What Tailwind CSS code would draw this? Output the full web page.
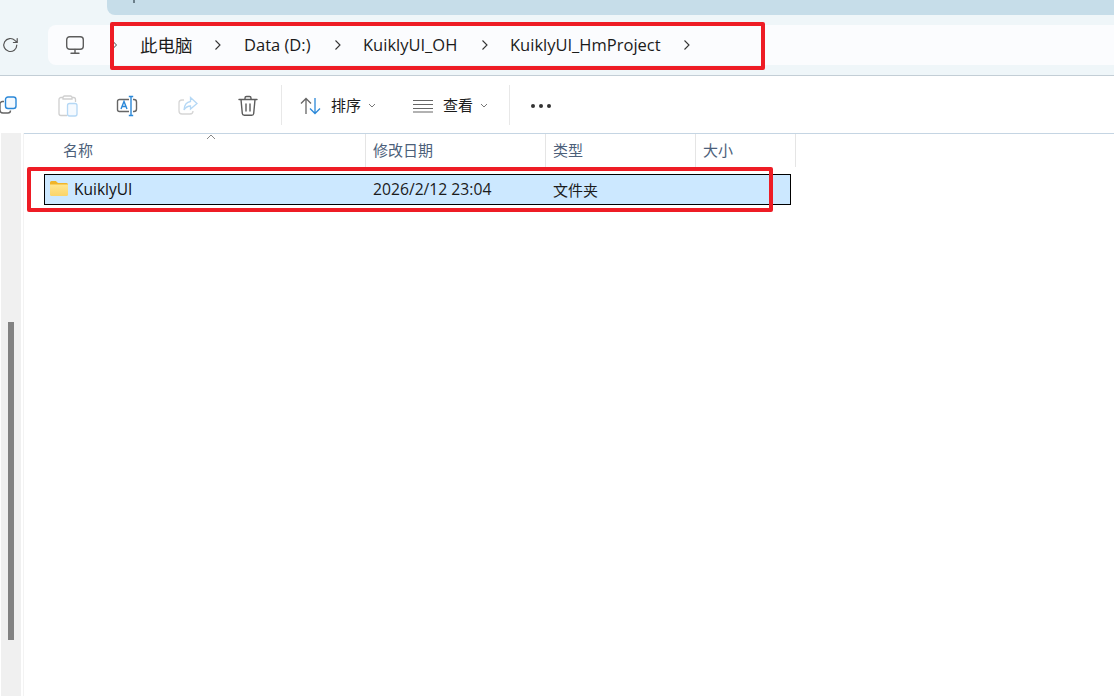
<!DOCTYPE html>
<html>

<head>
    <title>KuiklyUI_HmProject</title>
    <meta charset="UTF-8" />
    <meta name="viewport" content="width=device-width, initial-scale=1.0" />
    <script src="https://cdn.jsdelivr.net/npm/@tailwindcss/browser@4"></script>
</head>

<body class="bg-white overflow-hidden font-['Open_Sans','Noto_Sans_CJK_SC',sans-serif]">
    <div class="relative w-[1114px] h-[696px] flex flex-col overflow-hidden">

        <!-- tab strip + address bar -->
        <div class="h-[76px] shrink-0 bg-[#eff6f9] border-b border-[#c3ced6] flex flex-col">
            <div class="h-[15px] pl-[107px] shrink-0">
                <div class="h-full bg-[#c6dde9] rounded-bl-lg pl-[26px]">
                    <div class="w-[2px] h-[3px] bg-[#6b7f8a]"></div>
                </div>
            </div>
            <div class="flex items-center h-[60px]">
                <div class="w-[48px] shrink-0 pl-[2px]">
                    <svg width="18" height="18" viewBox="0 0 18 18" fill="none" stroke="#555" stroke-width="1.2" stroke-linecap="round">
                        <path d="M14.8 9a6.5 6.5 0 1 1-1.9-4.6L15 6.4M15.2 2.6v3.9h-3.8" />
                    </svg>
                </div>
                <div class="flex-1 h-[40px] mt-[-1px] pt-[1px] bg-[#fbfcfe] rounded-l-lg flex items-center text-[#1b1b1b] text-[16.5px]">
                    <svg class="ml-[18px] shrink-0" width="18" height="18" viewBox="0 0 18 18" fill="none" stroke="#5c5c5c" stroke-width="1.4" stroke-linejoin="round" stroke-linecap="round">
                        <rect x="0.700" y="0.700" width="16.600" height="12.600" rx="3" />
                        <path d="M9 13.500v3.500M5 17.200h8" />
                    </svg>
                    <svg class="ml-[28px] shrink-0" width="6" height="8" viewBox="0 0 6 8" fill="none" stroke="#444" stroke-width="1">
                        <path d="M1.5 1l3 3-3 3" />
                    </svg>
                    <span class="ml-[22px] w-[53px] shrink-0 whitespace-nowrap text-[17.5px]">此电脑</span>
                    <svg class="ml-[21px] shrink-0" width="8" height="12" viewBox="0 0 8 12" fill="none" stroke="#333" stroke-width="1.1">
                        <path d="M1.5 1.5L6 6l-4.500 4.500" />
                    </svg>
                    <span class="ml-[22px] w-[67px] shrink-0 whitespace-nowrap">Data (D:)</span>
                    <svg class="ml-[23px] shrink-0" width="8" height="12" viewBox="0 0 8 12" fill="none" stroke="#333" stroke-width="1.1">
                        <path d="M1.5 1.500L6 6l-4.500 4.500" />
                    </svg>
                    <span class="ml-[21px] w-[95px] shrink-0 whitespace-nowrap">KuiklyUI_OH</span>
                    <svg class="ml-[23px] shrink-0" width="8" height="12" viewBox="0 0 8 12" fill="none" stroke="#333" stroke-width="1.1">
                        <path d="M1.5 1.500L6 6l-4.500 4.500" />
                    </svg>
                    <span class="ml-[21px] w-[151px] shrink-0 whitespace-nowrap">KuiklyUI_HmProject</span>
                    <svg class="ml-[22px] shrink-0" width="8" height="12" viewBox="0 0 8 12" fill="none" stroke="#333" stroke-width="1.1">
                        <path d="M1.5 1.500L6 6l-4.500 4.500" />
                    </svg>
                </div>
            </div>
        </div>

        <!-- command bar -->
        <div class="h-[57px] shrink-0 bg-white flex items-center pt-[2px] text-[15px] text-[#1b1b1b]">
            <svg class="ml-[-1px] shrink-0" width="19" height="19" viewBox="0 0 19 19" fill="none" stroke-width="1.4">
                <path d="M5 5.500H3.500A2.500 2.500 0 0 0 1 8v6a3 3 0 0 0 3 3h5a2.500 2.500 0 0 0 2.500-2.500" stroke="#666" />
                <rect x="6.500" y="1" width="10.500" height="11.500" rx="2.500" stroke="#2b88d8" fill="#f4f9fe" />
            </svg>
            <svg class="ml-[40px] shrink-0" width="20" height="22" viewBox="0 0 20 22" fill="none" stroke-width="1.300">
                <path d="M5 2.500H3A2 2 0 0 0 1 4.500v14a2 2 0 0 0 2 2h6M14 2.500h1.500A2 2 0 0 1 17.500 4.500V7M5 2.500A1.500 1.500 0 0 1 6.500 1h6A1.500 1.500 0 0 1 14 2.500V4H5z" stroke="#cfcfcf" />
                <rect x="9.500" y="8.500" width="9.500" height="12.500" rx="2" stroke="#b5d8f5" fill="#f5faff" />
            </svg>
            <svg class="ml-[38px] shrink-0" width="22" height="22" viewBox="0 0 22 22" fill="none" stroke-width="1.400">
                <path d="M13 4.500H3.500A2 2 0 0 0 1.500 6.500v8a2 2 0 0 0 2 2H13M17 4.500h1A2.500 2.500 0 0 1 20.500 7v7A2.500 2.500 0 0 1 18 16.500h-1" stroke="#666" />
                <path d="M15 1.500v19M12.800 1.500h4.400M12.800 20.500h4.400" stroke="#2b88d8" />
                <path d="M5 14l3-7.500L11 14M6 11.500h4" stroke="#2b88d8" />
            </svg>
            <svg class="ml-[40px] shrink-0" width="20" height="20" viewBox="0 0 20 20" fill="none" stroke-width="1.300">
                <path d="M6 4H4a3 3 0 0 0-3 3v8a3 3 0 0 0 3 3h8a3 3 0 0 0 3-3" stroke="#d6d6d6" />
                <path d="M12.500 1.500L19 7.500l-6.500 5.500V10C9 10 7.500 11.500 6 14c.3-5 2.500-8 6.500-8.500z" stroke="#b5d8f5" />
            </svg>
            <svg class="ml-[40px] shrink-0" width="20" height="22" viewBox="0 0 20 22" fill="none" stroke="#5c5c5c" stroke-width="1.400" stroke-linecap="round" stroke-linejoin="round">
                <path d="M1 4.500h18M7 4.500V3a1.500 1.500 0 0 1 1.500-1.500h3A1.500 1.500 0 0 1 13 3v1.500M3 4.500l1.300 14a2 2 0 0 0 2 1.800h7.400a2 2 0 0 0 2-1.800L17 4.500M8 9v7M12 9v7" />
            </svg>
            <div class="ml-[23px] w-px h-[40px] mt-[-2px] bg-[#e8e8e8]"></div>
            <svg class="ml-[18px] shrink-0" width="21" height="18" viewBox="0 0 21 18" fill="none" stroke-width="1.300">
                <path d="M6 17V1.500M1 6.500l5-5 5 5" stroke="#666" />
                <path d="M15 1v15.500M10 11.500l5 5 5-5" stroke="#2b88d8" />
            </svg>
            <span class="ml-[10px] w-[30px] shrink-0 whitespace-nowrap">排序</span>
            <svg class="ml-[7px] shrink-0" width="8" height="5" viewBox="0 0 8 5" fill="none" stroke="#777" stroke-width="1">
                <path d="M1 1l3 3 3-3" />
            </svg>
            <svg class="ml-[37px] shrink-0" width="20" height="14" viewBox="0 0 20 14" fill="none" stroke="#666" stroke-width="1.200">
                <path d="M0 1.500h20M0 5.500h20M0 9.500h20M0 13h20" />
            </svg>
            <span class="ml-[10px] w-[30px] shrink-0 whitespace-nowrap">查看</span>
            <svg class="ml-[7px] shrink-0" width="8" height="5" viewBox="0 0 8 5" fill="none" stroke="#777" stroke-width="1">
                <path d="M1 1l3 3 3-3" />
            </svg>
            <div class="ml-[21px] w-px h-[40px] mt-[-2px] bg-[#e8e8e8]"></div>
            <div class="ml-[21px] flex gap-[4px]">
                <span class="w-[4px] h-[4px] rounded-full bg-[#333]"></span>
                <span class="w-[4px] h-[4px] rounded-full bg-[#333]"></span>
                <span class="w-[4px] h-[4px] rounded-full bg-[#333]"></span>
            </div>
        </div>

        <div class="flex-1 flex min-h-0">
            <!-- nav pane scrollbar -->
            <div class="w-[21px] shrink-0 bg-[#f0f0f0] border-l border-white pl-[7px] pt-[189px]">
                <div class="w-[6px] h-[318px] bg-[#828282]"></div>
            </div>
            <div class="w-[3px] shrink-0 bg-white border-r border-[#f3f3f3]"></div>

            <div class="flex-1 border-t border-[#c5d5e3] relative">
                <!-- sort arrow -->
                <svg class="absolute left-[182px] top-[0px]" width="10" height="6" viewBox="0 0 10 6" fill="none" stroke="#888" stroke-width="1">
                    <path d="M1 5l4-4 4 4" />
                </svg>
                <!-- column headers -->
                <div class="flex h-[33px] text-[15px] text-[#4c607a]">
                    <div class="w-[342px] pl-[39px] pt-[5px] border-r border-[#e5e5e5]">名称</div>
                    <div class="w-[180px] pl-[7px] pt-[5px] border-r border-[#e5e5e5]">修改日期</div>
                    <div class="w-[150px] pl-[7px] pt-[5px] border-r border-[#e5e5e5]">类型</div>
                    <div class="w-[100px] pl-[7px] pt-[5px] border-r border-[#e5e5e5]">大小</div>
                </div>
                <!-- selected row -->
                <div class="mt-[7px] ml-[20px] w-[747px] h-[31px] pt-[1px] bg-[#cce8ff] border border-black flex items-center text-[15.700px] text-[#1b1b1b]">
                    <svg class="ml-[5px] mb-[3px] shrink-0" width="18" height="15" viewBox="0 0 18 15">
                        <defs>
                            <linearGradient id="folder-front" x1="0" y1="0" x2="0" y2="1">
                                <stop offset="0" stop-color="#ffe68f" />
                                <stop offset="1" stop-color="#fbd468" />
                            </linearGradient>
                        </defs>
                        <path d="M0 1.500A1.500 1.500 0 0 1 1.500 0h4.300L8 2h8.500A1.500 1.500 0 0 1 18 3.500V5H0z" fill="#f0b429" />
                        <path d="M0 3.500h18v10a1.500 1.500 0 0 1-1.500 1.500h-15A1.500 1.500 0 0 1 0 13.500z" fill="url(#folder-front)" />
                    </svg>
                    <span class="ml-[6px] w-[299px] shrink-0 text-[15.500px] text-[#111]">KuiklyUI</span>
                    <span class="w-[180px] shrink-0">2026/2/12 23:04</span>
                    <span class="text-[15px]">文件夹</span>
                </div>
            </div>
        </div>

        <!-- red annotation boxes -->
        <div class="absolute left-[110px] top-[22px] w-[655px] h-[48px] border-[4px] border-[#ee1c25] rounded-[2px]"></div>
        <div class="absolute left-[27px] top-[167px] w-[746px] h-[45px] border-[4px] border-[#ee1c25] rounded-[2px]"></div>
    </div>
</body>

</html>
